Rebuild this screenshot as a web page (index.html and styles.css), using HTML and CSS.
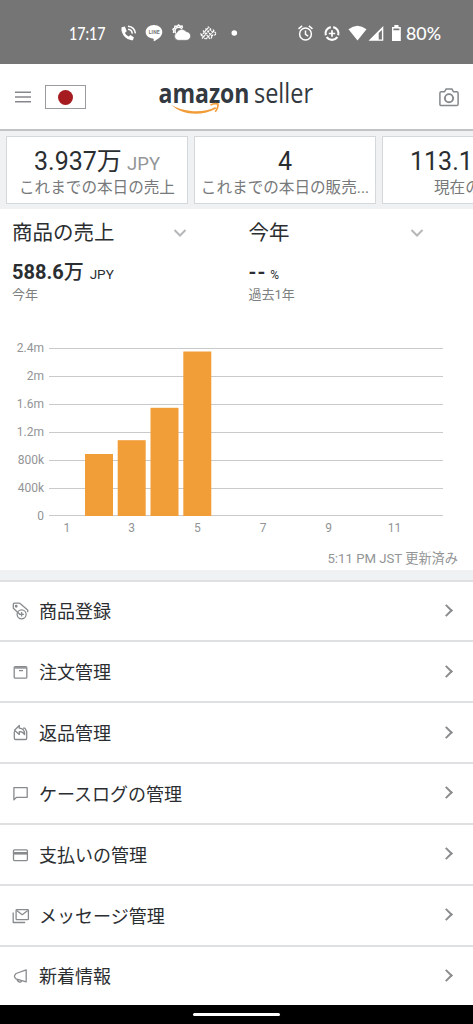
FILE: index.html
```html
<!DOCTYPE html>
<html lang="ja">
<head>
<meta charset="utf-8">
<meta name="viewport" content="width=device-width">
<title>amazon seller</title>
<link rel="stylesheet" href="styles.css">
</head>
<body>
<div class="status">
  <svg width="473" height="63" viewBox="0 0 473 63">
    <g fill="#fff">
      <text class="status-time" x="69" y="40" textLength="36.500" lengthAdjust="spacingAndGlyphs">17:17</text>
      <path d="M121.600 27.300l3.300-.8 1.800 4.700-1.800 1.700q1.600 2.800 3.800 3.700l1.800-1.600 3.300 2.200-.8 3q-4.200.8-8.100-3.200-4.300-4.800-3.300-9.700z"/>
      <path d="M128 29.300q3.700 .2 4.300 4.300M128 26.200q6.700 .6 7.400 7.200" fill="none" stroke="#fff" stroke-width="1.500"/>
      <path d="M154 25c-4.700 0-8.300 3-8.300 6.900 0 3.600 3 6 7.300 6.600.9.200.8 1.400.6 2.800 4-1.700 8.700-5 8.700-9.400 0-3.900-3.700-6.900-8.300-6.900z"/>
      <text class="line-label" x="148.800" y="34.200" textLength="10.800">LINE</text>
      <circle cx="178.700" cy="31" r="3.700" fill="none" stroke="#fff" stroke-width="1.500"/>
      <path d="M173.500 33l.3-2-.8-1.700 1.700-1.200.3-1.900 2 .1 1.500-1.300 1.500 1.200 2-.1.500 1.800" fill="none" stroke="#fff" stroke-width="1.500"/>
      <path d="M178 40.300a4.100 4.100 0 0 1-1-7.800 5.400 5.400 0 0 1 9.300-.8 4.300 4.300 0 0 1 0 8.600z" stroke="#757575" stroke-width=".6"/>
      <path d="M200.500 33.500l5 5.500M203 30.500l7 8.500M205.500 28.500l6.500 8M208 26.500l5 6.500M202 38.500l9-10M206 39l8-8M211 38.500l2-4M213 29.500l3.200 4.500-2 1.200M201 36l7-8" fill="none" stroke="#fff" stroke-width="1.200" stroke-dasharray="2.200 .7"/>
      <circle cx="234.300" cy="33" r="2.800"/>
    </g>
    <g fill="none" stroke="#fff" stroke-width="1.500">
      <circle cx="305.500" cy="34" r="5.900"/><path d="M305.500 30.500v3.900l2.700 1.700M298.500 28.800l3.600-3M312.500 28.800l-3.600-3"/>
      <path d="M333.200 27.100a6.400 6.400 0 0 1 5 8.100M337.300 37a6.400 6.400 0 0 1-10.600 0M325.800 35.200a6.400 6.400 0 0 1 5-8.100" stroke-width="2.200"/><path d="M332 30.300v6.400M328.800 33.500h6.400" stroke-width="1.700"/>
    </g>
    <g fill="#fff">
      <path d="M348.500 29.200Q357.500 22.200 366.500 29.200L357.500 40.500z"/>
      <path fill-rule="evenodd" d="M368.500 40.800L383.300 26v14.800zM378.700 39.400h3.200V29.900l-3.200 3.200z"/>
      <path fill-rule="evenodd" d="M392 27h2.300v-2h4.200v2h2.300v14H392zM393.400 28.600v1.700h6v-1.700z"/>
      <text class="status-time" x="406" y="40" textLength="35" lengthAdjust="spacingAndGlyphs">80%</text>
    </g>
  </svg>
</div>

<header class="header">
  <svg class="menu" width="16" height="12" viewBox="0 0 16 12"><path d="M0 1.300h16M0 6h16M0 10.700h16" stroke="#85888c" stroke-width="1.600"/></svg>
  <div class="flag"><span class="disc"></span></div>
  <svg class="logo" width="160" height="44" viewBox="0 0 160 44">
    <text class="logo-bold" x="0.500" y="28.500" textLength="91" lengthAdjust="spacingAndGlyphs">amazon</text>
    <text class="logo-light" x="96" y="28.500" textLength="59" lengthAdjust="spacingAndGlyphs">seller</text>
    <path d="M13.300 30.800C25 38 45 40 57.200 33L58.300 34.500C44 42.500 24 41.500 13.300 30.800z" fill="#f29c38"/>
    <path d="M52.500 31q4-2.200 7.400-1 .6 3.500-2.700 7.800" fill="none" stroke="#f29c38" stroke-width="1.700"/>
  </svg>
  <svg class="camera" width="20" height="19" viewBox="0 0 20 19" fill="none" stroke="#85898c"><path d="M2.300 3.800h3.200l1.600-2.700h5.800l1.600 2.700h3.200q1.400 0 1.400 1.400v11q0 1.400-1.400 1.400H2.300q-1.400 0-1.400-1.400v-11q0-1.400 1.400-1.400z" stroke-width="1.500"/><circle cx="10" cy="10.200" r="4.100" stroke-width="1.900"/></svg>
</header>

<section class="cards">
  <div class="card"><div class="value">3.937万 <span class="unit">JPY</span></div><div class="caption">これまでの本日の売上</div></div>
  <div class="card"><div class="value">4</div><div class="caption">これまでの本日の販売...</div></div>
  <div class="card"><div class="value">113.1万 <span class="unit">JPY</span></div><div class="caption">現在の残高</div></div>
</section>

<section class="sales">
  <div class="columns">
    <div class="column">
      <div class="select"><span>商品の売上</span><svg width="14" height="10" viewBox="0 0 14 10"><path d="M1.500 2L7 7.500 12.500 2" fill="none" stroke="#b5b7b9" stroke-width="2"/></svg></div>
      <div class="amount"><b>588.6<span class="man">万</span></b> <span class="small">JPY</span></div>
      <div class="period">今年</div>
    </div>
    <div class="column">
      <div class="select"><span>今年</span><svg width="14" height="10" viewBox="0 0 14 10"><path d="M1.500 2L7 7.500 12.500 2" fill="none" stroke="#b5b7b9" stroke-width="2"/></svg></div>
      <div class="amount"><b class="dash">--</b> <span class="small percent">%</span></div>
      <div class="period">過去1年</div>
    </div>
  </div>
  <svg class="chart" width="473" height="202" viewBox="0 338 473 202">
    <path d="M49 348.500h394M49 376.500h394M49 404.500h394M49 432.500h394M49 460.500h394M49 488.500h394M49 515.500h394" stroke="#c9cacb" stroke-width="1.200"/>
    <g fill="#f19e39">
      <rect x="85" y="454" width="28" height="62"/><rect x="117.700" y="440.200" width="28" height="75.800"/>
      <rect x="150.500" y="407.800" width="28" height="108.200"/><rect x="183.300" y="351.500" width="28" height="164.500"/>
    </g>
    <g class="axis" text-anchor="end">
      <text x="44" y="352">2.4m</text><text x="44" y="380">2m</text><text x="44" y="408">1.6m</text><text x="44" y="436">1.2m</text><text x="44" y="463.500">800k</text><text x="44" y="491.500">400k</text><text x="44" y="519.500">0</text>
    </g>
    <g class="axis" text-anchor="middle">
      <text x="66.800" y="532">1</text><text x="131.700" y="532">3</text><text x="197.300" y="532">5</text><text x="263" y="532">7</text><text x="328.500" y="532">9</text><text x="394.500" y="532">11</text>
    </g>
  </svg>
  <div class="updated">5:11 PM JST 更新済み</div>
</section>

<nav class="list">
  <a class="row"><svg class="icon" viewBox="0 0 18 18"><path d="M8 12.500L1.300 6.200V2.300q0-1.100 1.100-1.100h4.700q.8 0 1.300.5l7.200 6.200q.9 1-.3 2.200"/><circle cx="4.200" cy="4.200" r=".8"/><circle cx="9.600" cy="12.300" r="4.500"/><path d="M9.600 10v4.600M7.300 12.300h4.600"/></svg><span>商品登録</span><i class="chevron"></i></a>
  <a class="row"><svg class="icon" viewBox="0 0 18 18"><rect x="2.200" y="3.600" width="12.600" height="11.600" rx="1"/><path d="M3 4.900h11" stroke-width="1.500"/><path d="M7 7.600h4"/></svg><span>注文管理</span><i class="chevron"></i></a>
  <a class="row"><svg class="icon" viewBox="0 0 18 18"><path d="M3.300 6.500L2.300 8v6.300q0 1.200 1.200 1.200h10q1.200 0 1.200-1.200V7.500L13 4.200h-2M2.500 6.200l4.800-4.700v2.700q5.500.3 5.300 6.400-1.700-3.100-5.300-2.900v2.700z"/></svg><span>返品管理</span><i class="chevron"></i></a>
  <a class="row"><svg class="icon" viewBox="0 0 18 18"><path d="M1.900 14.800V2.700h13.300v9.600H4.600z"/></svg><span>ケースログの管理</span><i class="chevron"></i></a>
  <a class="row"><svg class="icon" viewBox="0 0 18 18"><rect x="1.500" y="3.800" width="13.900" height="10.800" rx="1"/><path d="M1.500 7.300h14" stroke-width="2.600"/></svg><span>支払いの管理</span><i class="chevron"></i></a>
  <a class="row"><svg class="icon" viewBox="0 0 18 18"><rect x="4.100" y="2.700" width="12.300" height="10" rx=".8"/><path d="M4.700 3.500l5.500 4.200L15.800 3.500M1.200 5.500v10h12"/></svg><span>メッセージ管理</span><i class="chevron"></i></a>
  <a class="row"><svg class="icon" viewBox="0 0 18 18"><path d="M14.200 2.900v11.900L3.900 11.800q-3-2.300.2-5.300zM5 12.200q.7 3.300 3.700 2.800.9-.5.800-1.400"/></svg><span>新着情報</span><i class="chevron"></i></a>
</nav>
<footer class="homebar"><span class="pill"></span></footer>
</body>
</html>
```
FILE: styles.css
```css
* { box-sizing: border-box; }
body {
  margin: 0;
  width: 473px;
  height: 1024px;
  overflow: hidden;
  background: #fff;
  color: #2b2e31;
  font-family: Roboto, "Noto Sans CJK JP", sans-serif;
}
svg { display: block; flex: none; }
.status { height: 63.500px; background: #757575; }
.status-time { font: 500 17px Lato, sans-serif; font-kerning: none; }
.line-label { font: 700 5px Roboto, sans-serif; fill: #757575; }

.header {
  height: 67.500px;
  display: flex;
  align-items: center;
  padding: 0 14px 0 15px;
  border-bottom: 2px solid #c2c3c7;
}
.menu { margin-top: 2px; }
.flag {
  width: 41px;
  height: 24px;
  margin: 2px 0 0 14px;
  border: 1px solid #999c9f;
  display: flex;
  align-items: center;
  justify-content: center;
}
.disc { width: 15px; height: 15px; border-radius: 50%; background: #a51b20; }
.logo { margin-left: 72px; margin-top: 10px; align-self: flex-start; }
.logo-bold { font: 700 27px "Open Sans", sans-serif; fill: #333940; }
.logo-light { font: 400 28px "Open Sans", sans-serif; fill: #333940; }
.camera { margin-left: auto; margin-top: 3px; }

.cards {
  height: 78px;
  display: flex;
  gap: 6px;
  padding: 5px 0 5px 6px;
  overflow: hidden;
  background: #eff1f3;
}
.card {
  flex: none;
  width: 182px;
  height: 68px;
  padding-top: 9px;
  background: #fff;
  border: 1.500px solid #d5d8db;
  text-align: center;
  white-space: nowrap;
}
.value { font-size: 25px; line-height: 31px; height: 31px; }
.unit { font-size: 18.500px; color: #949698; margin-left: -1px; }
.caption { font-size: 15.600px; line-height: 22px; color: #77797b; }

.sales { height: 360.500px; }
.columns { height: 129px; display: flex; padding-left: 12px; }
.column { flex: none; width: 236.500px; }
.select {
  display: flex;
  align-items: center;
  justify-content: space-between;
  width: 175px;
  height: 45px;
  font-size: 20.500px;
}
.select span { margin-top: -2px; }
.select svg { margin-top: 3px; }
.amount { height: 32px; padding-top: 2px; line-height: 32px; font-size: 20px; white-space: nowrap; }
.man { font-weight: 500; }
.small { font-size: 13.500px; margin-left: 1px; }
.dash { letter-spacing: 1px; }
.percent { font-size: 12px; margin-left: -1px; }
.period { font-size: 13px; line-height: 17px; color: #7d7f81; }
.axis { font: 12px Roboto, sans-serif; fill: #929496; }
.updated {
  padding-right: 15px;
  text-align: right;
  font-size: 13.200px;
  line-height: 38px;
  height: 29px;
  color: #929496;
}

.list { border-top: 10px solid #eff1f3; height: 435px; overflow: hidden; }
.row {
  display: flex;
  align-items: center;
  height: 60.850px;
  padding: 0 20px 0 12px;
  border-top: 2px solid #dfe0e1;
  font-size: 18px;
}
.row span { margin-top: -1px; }
.icon {
  width: 18px;
  height: 18px;
  margin-right: 9px;
  margin-top: 1px;
  fill: none;
  stroke: #888b8e;
  stroke-width: 1.300;
  stroke-linejoin: round;
}
.chevron {
  width: 9px;
  height: 9px;
  margin: -1px 2px 0 auto;
  border: solid #8a8c8e;
  border-width: 2px 2px 0 0;
  transform: rotate(45deg);
}
.homebar {
  height: 19.500px;
  background: #000;
  display: flex;
  justify-content: center;
  align-items: center;
}
.pill { width: 87px; height: 2.500px; border-radius: 2px; background: #fff; }
```
